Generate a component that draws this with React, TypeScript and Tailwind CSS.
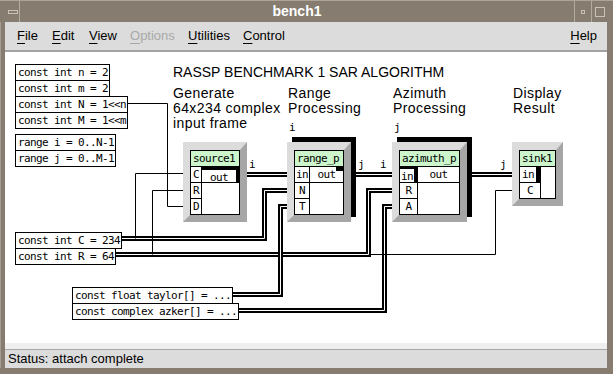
import React from 'react';

const mono = "font-['DejaVu_Sans_Mono','Liberation_Mono',monospace] text-[11px] leading-[15px] tracking-[-0.62px] whitespace-pre";
const bevel =
  'border-[7px] border-t-[8px] border-t-[#dcdcdc] border-l-[#dcdcdc] border-r-[#a6a6a6] border-b-[#a6a6a6] bg-[#c4c4c4]';
const cell = `bg-white text-center text-black ${mono}`;
const head = `col-span-2 bg-[#ccf5cc] pl-[2px] text-black ${mono}`;
const label = 'absolute top-[34px] text-[14px] leading-[15px] tracking-[0.4px]';

// wires, in page coordinates (the svg viewBox starts at the canvas corner)
const thinWires = [
  'M128 103.5H167.5V206.5H183',
  'M135.5 238.5V173.5H183',
  'M152.5 254.5V190.5H183',
  'M370 254.5H495.5V190.5H512',
];
const doubleWires = [
  'M116 254.5H368.5V190.5H392',
  'M122 238.5H264.5V190.5H287',
  'M233 294.5H280.5V206.5H287',
  'M239 310.5H384.5V206.5H392',
  'M247 174.5H287',
  'M355 174.5H392',
  'M467 174.5H512',
];

const Decl = ({ text, className = '' }: { text: string; className?: string }) => (
  <div className={`w-fit border border-black bg-white pl-[2px] pr-px text-black ${mono} ${className}`}>{text}</div>
);

const MenuItem = ({ label, className = '', disabled }: { label: string; className?: string; disabled?: boolean }) => (
  <span className={`${className} ${disabled ? 'text-[#a8a8a8]' : 'text-black'}`}>
    <span className="underline underline-offset-[3px]">{label[0]}</span>
    {label.slice(1)}
  </span>
);

export default function App() {
  return (
    <div className="w-[613px] h-[374px] overflow-hidden bg-[#867c70] border-t border-[#aca498] flex flex-col font-['Liberation_Sans',Arial,sans-serif]">
      {/* title bar */}
      <div className="h-[21px] flex shrink-0">
        <div className="w-[20px] border-r border-[#b3ab9f] flex items-center pl-[8px]">
          <div className="w-[10px] h-[4px] border border-[#cbc3b7]" />
        </div>
        <div className="flex-1 flex items-center justify-center text-white text-[14px] font-bold">bench1</div>
        <div className="w-[17px] border-l border-[#b3ab9f] flex items-center justify-center">
          <div className="w-[4px] h-[4px] border border-[#cbc3b7]" />
        </div>
        <div className="w-[22px] border-l border-[#b3ab9f] flex items-center pl-[3px]">
          <div className="w-[10px] h-[10px] border border-[#cbc3b7]" />
        </div>
      </div>

      <div className="h-[346px] flex shrink-0">
        <div className="w-[5px] border-l border-[#a59d91]" />
        <div className="w-[602px] flex flex-col">
          {/* menu bar */}
          <div className="h-[30px] shrink-0 bg-[#dcdcdc] border-b-2 border-[#a3a3a3] flex items-center pl-[12px] pr-[10px] text-[13px]">
            <MenuItem label="File" className="w-[35px]" />
            <MenuItem label="Edit" className="w-[37px]" />
            <MenuItem label="View" className="w-[41px]" />
            <MenuItem label="Options" className="w-[58px]" disabled />
            <MenuItem label="Utilities" className="w-[55px]" />
            <MenuItem label="Control" />
            <MenuItem label="Help" className="ml-auto" />
          </div>

          {/* canvas */}
          <div className="relative h-[291px] shrink-0 bg-white overflow-hidden text-black">
            <svg className="absolute left-0 top-0" width={602} height={291} viewBox="5 52 602 291">
              {doubleWires.map((d, i) => (
                <g key={i}>
                  <path d={d} fill="none" stroke="#000" strokeWidth={5} />
                  <path d={d} fill="none" stroke="#fff" strokeWidth={1} />
                </g>
              ))}
              {thinWires.map((d, i) => (
                <path key={i} d={d} fill="none" stroke="#000" strokeWidth={1} />
              ))}
            </svg>

            <div className="absolute left-[168px] top-[13px] text-[14px] leading-[15px]">RASSP BENCHMARK 1 SAR ALGORITHM</div>
            <div className={`${label} left-[168px]`}>
              Generate<br />64x234 complex<br />input frame
            </div>
            <div className={`${label} left-[283px]`}>
              Range<br />Processing
            </div>
            <div className={`${label} left-[388px]`}>
              Azimuth<br />Processing
            </div>
            <div className={`${label} left-[508px]`}>
              Display<br />Result
            </div>
            <span className={`absolute left-[284px] top-[68px] ${mono}`}>i</span>
            <span className={`absolute left-[389px] top-[68px] ${mono}`}>j</span>
            <span className={`absolute left-[244px] top-[105px] ${mono}`}>i</span>
            <span className={`absolute left-[353px] top-[105px] ${mono}`}>j</span>
            <span className={`absolute left-[375px] top-[105px] ${mono}`}>i</span>
            <span className={`absolute left-[495px] top-[105px] ${mono}`}>j</span>

            {/* declarations */}
            <div className="absolute left-[10px] top-[12px] flex flex-col">
              <Decl text="const int n = 2" />
              <Decl text="const int m = 2" className="-mt-px" />
              <Decl text="const int N = 1<<n" className="-mt-px" />
              <Decl text="const int M = 1<<m" className="-mt-px" />
            </div>
            <div className="absolute left-[10px] top-[82px] flex flex-col">
              <Decl text="range i = 0..N-1" />
              <Decl text="range j = 0..M-1" className="-mt-px" />
            </div>
            <div className="absolute left-[10px] top-[180px] flex flex-col">
              <Decl text="const int C = 234" />
              <Decl text="const int R = 64" className="-mt-px" />
            </div>
            <div className="absolute left-[67px] top-[235px] flex flex-col">
              <Decl text="const float taylor[] = ..." />
              <Decl text="const complex azker[] = ..." className="-mt-px" />
            </div>

            {/* source1 */}
            <div className={`absolute left-[178px] top-[90px] ${bevel}`}>
              <div className="grid grid-cols-[10px_37px] auto-rows-[15px] gap-px bg-black p-px">
                <div className={head}>source1</div>
                <div className={cell}>C</div>
                <div className={`${cell} border-t-[3px] border-r-[3px] border-black`}>out</div>
                <div className={cell}>R</div>
                <div className={`${cell} row-span-2`} />
                <div className={cell}>D</div>
              </div>
            </div>

            {/* range_p */}
            <div className="absolute left-[282px] top-[90px]">
              <div className="absolute left-[5px] -top-[5px] w-[64px] h-[80px] bg-black" />
              <div className={`relative ${bevel}`}>
                <div className="grid grid-cols-[14px_33px] auto-rows-[15px] gap-px bg-black p-px">
                  <div className={head}>range_p</div>
                  <div className={cell}>in</div>
                  <div className={`${cell} relative`}>
                    out
                    <span className="absolute right-0 top-0 w-[7px] h-[4px] bg-black" />
                  </div>
                  <div className={cell}>N</div>
                  <div className={`${cell} row-span-2`} />
                  <div className={cell}>T</div>
                </div>
              </div>
            </div>

            {/* azimuth_p */}
            <div className="absolute left-[387px] top-[90px]">
              <div className="absolute left-[5px] -top-[5px] w-[75px] h-[80px] bg-black" />
              <div className={`relative ${bevel}`}>
                <div className="grid grid-cols-[17px_41px] auto-rows-[15px] gap-px bg-black p-px">
                  <div className={head}>azimuth_p</div>
                  <div className={`${cell} border-t-[2px] border-r-[3px] border-black`}>in</div>
                  <div className={cell}>out</div>
                  <div className={cell}>R</div>
                  <div className={`${cell} row-span-2`} />
                  <div className={cell}>A</div>
                </div>
              </div>
            </div>

            {/* sink1 */}
            <div className={`absolute left-[507px] top-[90px] ${bevel}`}>
              <div className="grid grid-cols-[20px_14px] auto-rows-[15px] gap-px bg-black p-px">
                <div className={head}>sink1</div>
                <div className={`${cell} border-r-[4px] border-black`}>in</div>
                <div className={`${cell} row-span-2`} />
                <div className={cell}>C</div>
              </div>
            </div>
          </div>

          <div className="h-[6px] shrink-0 bg-[#efefef]" />
          {/* status bar */}
          <div className="h-[19px] shrink-0 bg-[#dcdcdc] border-t border-[#a8a8a8] flex items-center pl-[3px] text-[13px] text-black">
            Status: attach complete
          </div>
        </div>
        <div className="w-[6px]" />
      </div>
      <div className="h-[6px] shrink-0" />
    </div>
  );
}
